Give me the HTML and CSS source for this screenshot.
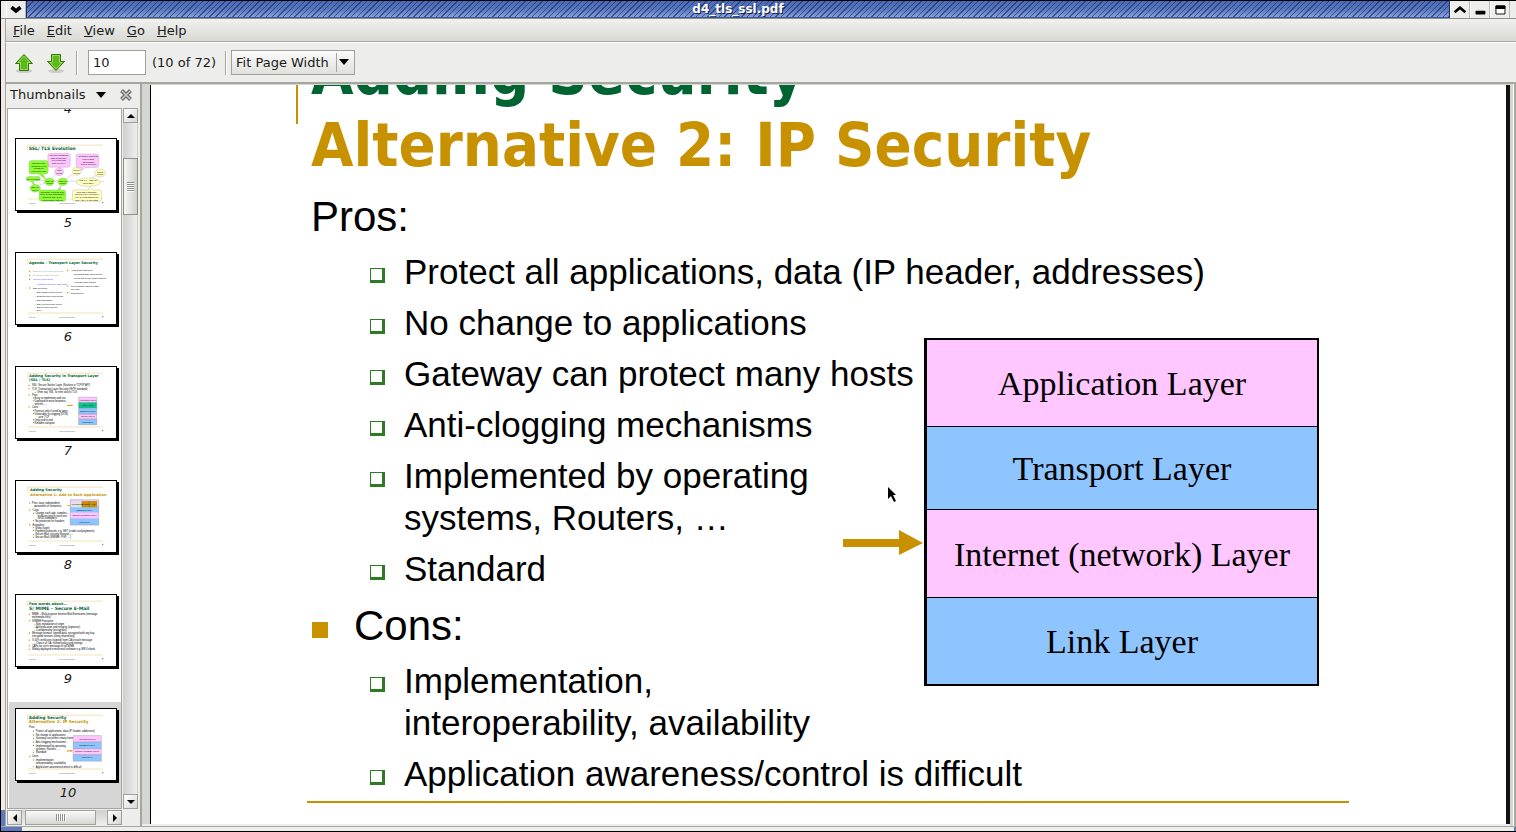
FILE: index.html
```html
<!DOCTYPE html>
<html lang="en">
<head>
<meta charset="utf-8">
<title>d4_tls_ssl.pdf</title>
<link rel="stylesheet" href="styles.css">
</head>
<body>
<svg class="defs" aria-hidden="true">
  <defs>
    <g id="page-frame">
      <rect width="306" height="219" fill="#fff"/>
      <path d="M35 36V19H267M35 185H267" fill="none" stroke="#f3e2b6" stroke-width="3"/>
      <text x="39" y="199" font-size="6" fill="#555">11/9/05</text>
      <text x="130" y="199" font-size="6" fill="#555">AmirHerzberg.com</text>
      <rect x="264" y="194" width="4" height="4" fill="#888"/>
    </g>
  </defs>
</svg>
<div class="window">
  <header class="titlebar">
    <button class="wm" aria-label="Window menu"><svg viewBox="0 0 20 17"><path d="M5 6l5 4 5-4" fill="none" stroke="#000" stroke-width="4"/></svg></button>
    <h1 class="caption">d4_tls_ssl.pdf</h1>
    <div class="wm-group">
      <button class="wm" aria-label="Shade"><svg viewBox="0 0 20 17"><path d="M4 11.500l6-5 6 5" fill="none" stroke="#000" stroke-width="3"/></svg></button>
      <button class="wm" aria-label="Minimize"><svg viewBox="0 0 20 17"><rect x="5" y="10" width="11" height="4" rx="1"/></svg></button>
      <button class="wm" aria-label="Maximize"><svg viewBox="0 0 20 17"><path d="M5.500 4.500h10v9h-10z" fill="#fff" stroke="#000"/><path d="M6 4h9l1 1v3H5V5z"/></svg></button>
    </div>
  </header>
  <div class="frame">
    <nav class="menubar">
      <button><u>F</u>ile</button><button><u>E</u>dit</button><button><u>V</u>iew</button><button><u>G</u>o</button><button><u>H</u>elp</button>
    </nav>
    <div class="toolbar">
      <button class="tool" aria-label="Previous page"><svg viewBox="0 0 20 20"><ellipse cx="10" cy="18" rx="8" ry="2" fill="#000" opacity=".14"/><path d="M10 1.500L18.500 10.500H14.500V17.500H5.500V10.500H1.500z" fill="#5fb81a" stroke="#2f7a06"/><path d="M10 3l6 6.500h-2.500v7h-7v-7H4z" fill="none" stroke="#a5e070" opacity=".8"/></svg></button>
      <button class="tool" aria-label="Next page"><svg viewBox="0 0 20 20"><ellipse cx="10" cy="18" rx="8" ry="2" fill="#000" opacity=".14"/><path d="M5.500 1.500H14.500V8.500H18.500L10 17.500 1.500 8.500H5.500z" fill="#5fb81a" stroke="#2f7a06"/><path d="M6.500 2.500h7v7H16L10 16 4 9.500h2.500z" fill="none" stroke="#a5e070" opacity=".8"/></svg></button>
      <span class="sep"></span>
      <input class="page-input" id="page" type="text" value="10" aria-label="Page">
      <label for="page" class="page-count">(10 of 72)</label>
      <span class="sep"></span>
      <div class="zoom">
        <select aria-label="Zoom"><option>Fit Page Width</option></select>
        <svg class="zoom-arrow" viewBox="0 0 10 6"><path d="M0 0h10L5 6z"/></svg>
      </div>
    </div>
    <main class="body">
      <aside class="sidebar">
        <div class="side-head">
          <button class="side-title">Thumbnails<svg viewBox="0 0 10 6"><path d="M0 0h10L5 6z"/></svg></button>
          <button class="side-close" aria-label="Close sidebar"><svg viewBox="0 0 12 12"><path d="M1.500 1.500l9 9M10.500 1.500l-9 9" stroke="#6f716b" stroke-width="4"/><path d="M2 2l8 8M10 2l-8 8" stroke="#c9cac6" stroke-width="1.500"/></svg></button>
        </div>
        <div class="side-grid">
          <ol class="thumbs">
            <li class="thumb"><svg class="page" viewBox="0 0 306 219"><use href="#page-frame"/></svg><span>4</span></li>
            <li class="thumb"><svg class="page" viewBox="0 0 306 219"><use href="#page-frame"/>
              <text class="t green" x="38" y="35" font-size="14">SSL/ TLS Evolution</text>
              <g stroke="#9a9a8a" stroke-width="1">
                <path d="M60 128L270 132M104 128l24-30M146 128l36-26M215 128l40-20M64 146l30-14" fill="none"/>
                <g fill="#ffc6ff"><path d="M104 44h56q6 0 6 8v27q0 8-8 8h-17l-9 8 0-8h-27q-8 0-8-8V52q0-8 7-8zM192 46h54q8 0 8 8v26q0 8-8 8h-34l-15 12 3-12h-9q-7 0-7-8V54q0-8 8-8z"/><ellipse cx="132" cy="101" rx="14" ry="12"/></g>
                <g fill="#8cff32"><path d="M46 66h46q6 0 6 8v27q0 7-8 7h-8l10 20-22-20H46q-7 0-7-7V74q0-8 7-8zM38 116h30q6 0 6 7 0 6-6 6H52l4 14-14-14h-4q-8 0-8-6 0-7 8-7zM76 157h50l12-12-4 12h11q7 0 7 7v20q0 8-8 8H78q-8 0-8-8v-20q0-7 6-7z"/><ellipse cx="102" cy="132" rx="15" ry="12"/><ellipse cx="143" cy="132" rx="15" ry="12"/><ellipse cx="58" cy="152" rx="16" ry="12"/></g>
                <g fill="#ffffc0"><ellipse cx="186" cy="100" rx="14" ry="12"/><ellipse cx="258" cy="105" rx="17" ry="12"/><ellipse cx="222" cy="133" rx="38" ry="13"/><path d="M180 157h42l4-10 10 10h20q7 0 7 7v20q0 8-8 8h-74q-8 0-8-8v-20q0-7 7-7z"/></g>
              </g>
              <g class="tiny" text-anchor="middle">
                <text x="131" y="53">Microsoft suggests</text><text x="131" y="61">SSL 2 insecure;</text><text x="131" y="69">develops PCT</text><text x="131" y="77">with fixes to it</text>
                <text x="222" y="55">Netscape suggests</text><text x="222" y="64">TLS in IETF</text><text x="222" y="73">as standard</text><text x="222" y="81">secure protocol</text>
                <text x="69" y="76">Shipped with</text><text x="69" y="85">Netscape in all</text><text x="69" y="94">browsers</text><text x="69" y="102">encryption only</text>
                <text x="132" y="100">PCT</text><text x="132" y="108">(1995)</text><text x="186" y="100">STLP</text><text x="186" y="108">(1996)</text>
                <text x="52" y="126">Not released</text><text x="58" y="151">SSL v1</text><text x="58" y="159">(1994)</text><text x="102" y="132">SSL v2</text><text x="102" y="140">(1995)</text><text x="143" y="132">SSL v3</text><text x="143" y="140">(1996)</text><text x="222" y="131">TLS 1.0 = SSL 3.1</text><text x="222" y="140">RFC 2246</text><text x="258" y="104">WTLS</text><text x="258" y="112">(1998)</text>
                <text x="111" y="166">Netscape redesign with</text><text x="111" y="174">more secure handshake;</text><text x="111" y="182">supports RSA &amp; DH</text><text x="111" y="190">incompatible with v2</text>
                <text x="217" y="166">TLS: IETF standard,</text><text x="217" y="174">improved key derivation</text><text x="217" y="182">HMAC, must DSS &amp; DH</text><text x="217" y="190">RSA, SHA-1 and MD5</text>
              </g></svg><span>5</span></li>
            <li class="thumb"><svg class="page" viewBox="0 0 306 219"><use href="#page-frame"/>
              <text class="t green" x="39" y="33" font-size="11">Agenda – Transport Layer Security</text>
              <g fill="#e0a020"><path d="M39 55h4v4h-4zM39 67h4v4h-4zM39 79h4v4h-4zM39 106h4v4h-4zM156 52h4v4h-4zM156 100h4v4h-4zM156 120h4v4h-4z"/></g>
              <g class="tiny"><g fill="#999"><text x="51" y="60">Example: protecting payments</text><text x="51" y="72">Evolution of SSL and TLS</text></g><g fill="#33f"><text x="51" y="84">Layers of protection</text><text x="60" y="99">– Transport Security (SSL/TLS)</text></g>
                <text x="51" y="111">SSL Protocols</text><text x="57" y="123">– SSL phases and services</text><text x="57" y="135">– Sessions and connections</text><text x="57" y="147">– SSL handshake</text><text x="57" y="159">– SSL protocols and layers</text><text x="57" y="171">– SSL Record protocol</text><text x="62" y="180">layer</text>
                <text x="168" y="56">Attacks and SSL/TLS</text><text x="173" y="69">– Designing SSL applications</text><text x="173" y="81">– Client and server authentication</text><text x="173" y="93">– Web spoofing attacks</text><text x="168" y="104">Cryptographic issues in SSL</text><text x="168" y="113">and TLS</text><text x="168" y="125">Conclusions</text></g></svg><span>6</span></li>
            <li class="thumb"><svg class="page" viewBox="0 0 306 219"><use href="#page-frame"/>
              <g class="t green" font-size="11"><text x="39" y="30">Adding Security in Transport Layer</text><text x="39" y="44">(SSL / TLS)</text></g>
              <g fill="#e0a020"><path d="M37 55h4v4h-4zM37 65h4v4h-4zM37 85h4v4h-4zM37 121h4v4h-4zM156 117h14v-2l5 3-5 4v-2h-14z"/></g>
              <g fill="#2a8a2a"><path d="M51 94h3v3h-3zM51 103h3v3h-3zM51 133h3v3h-3zM51 142h3v3h-3zM51 161h3v3h-3zM51 170h3v3h-3z"/></g>
              <g class="tiny big"><text x="48" y="60">SSL: Secure Socket Layer (Sockets is TCP/IP API)</text><text x="48" y="70">TLS: Transaction Layer Security (IETF standard)</text><text x="56" y="79">– Often say 'SSL' to refer also to TLS</text><text x="48" y="90">Pros:</text><text x="56" y="100">Easy to implement and use</text><text x="56" y="109">Deployed in most browsers,</text><text x="56" y="117">servers, …</text><text x="48" y="127">Cons:</text><text x="56" y="139">Protects only if used by apps</text><text x="56" y="148">Vulnerable to clogging (DOS)</text><text x="68" y="157">over TCP</text><text x="56" y="167">Only end to end</text><text x="56" y="176">Reliable transport</text></g>
              <g stroke="#777"><path d="M192 93h56v17h-56zM192 145h56v16h-56z" fill="#ffc6ff"/><path d="M192 110h56v17h-56z" fill="#00c890"/><path d="M192 127h56v18h-56zM192 161h56v17h-56z" fill="#8fc5ff"/></g>
              <g class="tiny" text-anchor="middle"><text x="220" y="104">Application Layer</text><text x="220" y="121">SSL / TLS</text><text x="220" y="138">Transport Layer</text><text x="220" y="155">Internet Layer</text><text x="220" y="172">Link Layer</text></g></svg><span>7</span></li>
            <li class="thumb"><svg class="page" viewBox="0 0 306 219"><use href="#page-frame"/>
              <text class="t green" x="42" y="30" font-size="11">Adding Security</text><text class="t gold" x="42" y="45" font-size="11">Alternative 1: Add to Each Application</text>
              <g fill="#e0a020"><path d="M39 66h4v4h-4zM39 88h4v4h-4zM39 133h4v4h-4zM156 75h12v-3l6 4-6 4v-3h-12z"/></g>
              <g fill="#2a8a2a"><path d="M51 98h3v3h-3zM51 121h3v3h-3zM51 143h3v3h-3zM51 151h3v3h-3zM51 164h3v3h-3zM51 172h3v3h-3z"/></g>
              <g class="tiny big"><text x="48" y="72">Pros: easy, independent,</text><text x="54" y="81">awareness of semantics</text><text x="50" y="93">Cons:</text><text x="58" y="103">Change each app, complex –</text><text x="66" y="111">build security in each one</text><text x="66" y="118">on all computers</text><text x="58" y="127">No protection for headers</text><text x="50" y="138">Examples:</text><text x="58" y="148">S/key (login)</text><text x="58" y="156">Payment protocols, e.g. SET (credit card payments)</text><text x="58" y="168">Secure Mail: security features, …</text><text x="58" y="177">Secure Mail (S/MIME, PGP, …)</text></g>
              <path d="M166 58h88v78h-88z" fill="#8fc5ff" stroke="#777"/><path d="M167 59h86v20h-86zM167 97h86v19h-86z" fill="#ffc6ff"/><path d="M168 63h34v18h-34z" fill="#e4e4dc"/><path d="M202 62h47v19h-47z" fill="#c89000"/><path d="M225 62v19M202 62v19" stroke="#555"/>
              <g class="tiny" text-anchor="middle"><text x="185" y="74">Application</text><text x="214" y="74">Security</text><text x="237" y="74">App</text><text x="210" y="91">Transport Layer</text><text x="210" y="109">Internet (network) Layer</text><text x="210" y="129">Link Layer</text></g></svg><span>8</span></li>
            <li class="thumb"><svg class="page" viewBox="0 0 306 219"><use href="#page-frame"/>
              <text class="t green" x="39" y="30" font-size="11">Few words about…</text><text class="t green" x="39" y="47" font-size="14">S/ MIME – Secure E-Mail</text>
              <g fill="#e0a020"><path d="M38 58h4v4h-4zM38 77h4v4h-4zM38 116h4v4h-4zM38 137h4v4h-4zM38 155h4v4h-4zM38 166h4v4h-4z"/></g>
              <g class="tiny big"><text x="48" y="63">MIME – Multi-purpose Internet Mail Extensions (message</text><text x="48" y="72">multimedia files)</text><text x="48" y="82">S/MIME Functions:</text><text x="54" y="92">– Non-repudiation of origin</text><text x="54" y="101">– Authentication and integrity (signature)</text><text x="54" y="110">– Confidentiality (encryption)</text><text x="48" y="120">Message formats: signed-data, encrypted with any key,</text><text x="48" y="129">encrypted session (using shared key)</text><text x="48" y="141">X.509 certificates (signed) from CA to each message</text><text x="54" y="150">– Choice of CA: trusted policy and settings</text><text x="48" y="159">CAFs for cert's message in full MIME</text><text x="48" y="171">Widely deployed in most mail software e.g. MS Outlook</text></g></svg><span>9</span></li>
            <li class="thumb selected"><svg class="page" viewBox="0 0 306 219"><use href="#page-frame"/>
              <text class="t green" x="38" y="30" font-size="13">Adding Security</text><text class="t gold" x="38" y="44" font-size="13">Alternative 2: IP Security</text>
              <path d="M39 144h4v4h-4zM156 127h12v-2l6 4-6 4v-2h-12z" fill="#e0a020"/>
              <g fill="#2a8a2a"><path d="M51 67h3v3h-3zM51 79h3v3h-3zM51 90h3v3h-3zM51 100h3v3h-3zM51 111h3v3h-3zM51 132h3v3h-3zM51 156h3v3h-3zM51 177h3v3h-3z"/></g>
              <g class="tiny big"><text x="39" y="59">Pros:</text><text x="60" y="72">Protect all applications, data (IP header, addresses)</text><text x="60" y="84">No change to applications</text><text x="60" y="94">Gateway can protect many hosts</text><text x="60" y="105">Anti-clogging mechanisms</text><text x="60" y="116">Implemented by operating</text><text x="60" y="125">systems, Routers, …</text><text x="60" y="137">Standard</text><text x="48" y="149">Cons:</text><text x="60" y="161">Implementation,</text><text x="60" y="170">interoperability, availability</text><text x="60" y="182">Application awareness/control is difficult</text></g>
              <g stroke="#888"><path d="M175 82h87v20h-87zM175 122h87v19h-87z" fill="#ffc6ff"/><path d="M175 102h87v20h-87zM175 141h87v20h-87z" fill="#8fc5ff"/></g>
              <g class="tiny" text-anchor="middle"><text x="218" y="95">Application Layer</text><text x="218" y="114">Transport Layer</text><text x="218" y="134">Internet (network) Layer</text><text x="218" y="152">Link Layer</text></g></svg><span>10</span></li>
          </ol>
          <div class="vscroll">
            <button class="sb" aria-label="Scroll up"><svg viewBox="0 0 8 4"><path d="M4 0l4 4H0z"/></svg></button>
            <div class="vtrough"><div class="vthumb"></div></div>
            <button class="sb" aria-label="Scroll down"><svg viewBox="0 0 8 4"><path d="M0 0h8L4 4z"/></svg></button>
          </div>
          <div class="hscroll">
            <button class="sb" aria-label="Scroll left"><svg viewBox="0 0 8 8"><path d="M2 4l4-4v8z"/></svg></button>
            <div class="htrough"><div class="hthumb"></div></div>
            <button class="sb" aria-label="Scroll right"><svg viewBox="0 0 8 8"><path d="M6 4L2 0v8z"/></svg></button>
          </div>
        </div>
      </aside>
      <section class="document">
        <article class="slide">
          <h2 class="slide-title">Adding Security<br><span>Alternative 2: IP Security</span></h2>
          <p class="head">Pros:</p>
          <ul class="points">
            <li>Protect all applications, data (IP header, addresses)</li>
            <li>No change to applications</li>
            <li>Gateway can protect many hosts</li>
            <li>Anti-clogging mechanisms</li>
            <li>Implemented by operating<br>systems, Routers, …</li>
            <li>Standard</li>
          </ul>
          <p class="head marked">Cons:</p>
          <ul class="points">
            <li>Implementation,<br>interoperability, availability</li>
            <li>Application awareness/control is difficult</li>
          </ul>
          <hr class="rule">
          <div class="layers">
            <div>Application Layer</div><div>Transport Layer</div><div>Internet (network) Layer</div><div>Link Layer</div>
          </div>
          <svg class="pointer-arrow" viewBox="0 0 80 26"><path d="M0 9h56V0l24 13-24 12v-8H0z" fill="#c79100"/></svg>
          <svg class="cursor" viewBox="0 0 9 15"><path d="M0 0l8 8H5l3 6-2 1-3-6-3 3z"/></svg>
        </article>
      </section>
      <div class="doc-edge"></div>
    </main>
  </div>
  <footer class="resize"><span></span><span></span></footer>
</div>
</body>
</html>
```
FILE: styles.css
```css
*, *::before, *::after { box-sizing: border-box; }
body {
  margin: 0;
  background: #ededeb;
  color: #1a1a1a;
  font: 13px/16px "DejaVu Sans", sans-serif;
}
button {
  margin: 0;
  padding: 0;
  border: 0;
  background: none;
  color: inherit;
  font: inherit;
}
.defs { position: absolute; width: 0; height: 0; }
.window {
  display: flex;
  flex-direction: column;
  height: 100vh;
  overflow: hidden;
  border-left: 1px solid #000;
}

/* Title bar */
.titlebar {
  display: flex;
  flex: none;
  height: 19px;
  padding-left: 5px;
  border-top: 1px solid #000;
  border-bottom: 1px solid #8d8f89;
  background: #ededeb;
}
.wm {
  width: 20px;
  height: 17px;
  border-left: 1px solid #fff;
  border-right: 1px solid #b8b8b4;
  background: #ededeb;
}
.wm svg { display: block; width: 18px; height: 17px; }
.wm-group { display: flex; padding-right: 6px; border-left: 1px solid #1c2f66; }
.caption {
  flex: 1;
  margin: 0;
  border-left: 1px solid #1c2f66;
  border-bottom: 1px solid #3b5599;
  background:
    repeating-linear-gradient(135deg, rgba(20, 38, 92, .6) 0 1px, transparent 1px 4px),
    linear-gradient(#4a6cb8, #5876bd 50%, #86a0d8);
  color: #fff;
  font: bold 12px/17px "DejaVu Sans", sans-serif;
  text-align: center;
  text-shadow: 1px 1px 0 #13204a;
}

/* Menu bar and toolbar */
.frame {
  display: flex;
  flex: 1;
  flex-direction: column;
  min-height: 0;
  padding-left: 4px;
  background: linear-gradient(to top, #5b7bc0 16px, #f0e9e7 16px) left / 4px 100% no-repeat;
}
.menubar {
  display: flex;
  flex: none;
  gap: 12px;
  height: 23px;
  padding: 1px 0 0 7px;
  border-left: 1px solid #a5a79f;
  border-bottom: 1px solid #a5a79f;
  background: linear-gradient(#f0f0ee, #d9dad4);
}
.toolbar {
  display: flex;
  flex: none;
  align-items: center;
  height: 42px;
  padding-left: 8px;
  border-left: 1px solid #a5a79f;
  border-top: 1px solid #fff;
  border-bottom: 2px solid #a5a79f;
}
.tool { width: 20px; height: 20px; margin-right: 12px; }
.tool + .tool { margin-right: 10px; }
.tool svg { display: block; width: 20px; height: 20px; }
.sep {
  width: 2px;
  height: 24px;
  border-left: 1px solid #a5a79f;
  border-right: 1px solid #fff;
}
.page-input {
  width: 58px;
  height: 25px;
  margin: 0 6px 0 10px;
  padding: 0 4px;
  border: 1px solid #a0a29a;
  background: #fff;
  color: #1a1a1a;
  font: 13px "DejaVu Sans", sans-serif;
}
.page-count { margin-right: 9px; }
.zoom { position: relative; margin-left: 4px; }
.zoom select {
  width: 124px;
  height: 25px;
  padding: 0 4px;
  border: 1px solid #a0a29a;
  border-radius: 0;
  appearance: none;
  background: linear-gradient(#fbfbfa, #e0e0dc);
  color: #1a1a1a;
  font: 13px "DejaVu Sans", sans-serif;
}
.zoom::after {
  position: absolute;
  top: 3px;
  right: 18px;
  height: 19px;
  border-left: 1px solid #a5a79f;
  content: "";
}
.zoom-arrow { position: absolute; top: 9px; right: 6px; width: 10px; height: 6px; }

/* Sidebar */
.body { display: flex; flex: 1; min-height: 0; }
.sidebar {
  display: flex;
  flex: none;
  flex-direction: column;
  width: 137px;
  border-left: 1px solid #a5a79f;
  border-right: 2px solid #a5a79f;
}
.side-head {
  display: flex;
  flex: none;
  align-items: center;
  justify-content: space-between;
  height: 24px;
  padding: 0 8px 3px 4px;
}
.side-title { display: flex; align-items: center; gap: 10px; }
.side-title svg { width: 10px; height: 6px; }
.side-close svg { display: block; width: 12px; height: 12px; }
.side-grid {
  display: grid;
  flex: 1;
  grid-template: minmax(0, 1fr) 16px / minmax(0, 1fr) 16px;
  gap: 1px;
  min-height: 0;
  padding: 0 1px;
}
.thumbs {
  overflow: hidden;
  margin: 0;
  padding: 0 0 0 1px;
  border: 1px solid #a5a79f;
  background: #fff;
  list-style: none;
}
.thumb {
  display: flex;
  flex-direction: column;
  align-items: center;
  height: 106px;
  margin-bottom: 8px;
  padding: 6px 0 0 2px;
}
.thumb:first-child { margin-top: -91px; }
.thumb.selected { background: #d6d6d6; }
.page {
  width: 102px;
  height: 73px;
  border: 1px solid #000;
  background: #fff;
  box-shadow: 2px 2px 0 #000;
  font-family: "Liberation Sans", sans-serif;
}
.thumb span { margin-top: 4px; padding-left: 4px; font-style: italic; }
.t { font-family: "DejaVu Sans", sans-serif; font-weight: bold; }
.green { fill: #006432; }
.gold { fill: #c79100; }
.tiny { font-size: 7px; }
.big { font-size: 8px; }

/* Scroll bars */
.sb {
  display: grid;
  place-items: center;
  flex: none;
  width: 15px;
  height: 15px;
  border: 1px solid #a0a29a;
  background: linear-gradient(135deg, #fff, #d6d7d3);
}
.sb svg { width: 8px; height: 8px; }
.vscroll { display: flex; flex-direction: column; }
.vtrough {
  flex: 1;
  width: 15px;
  padding-top: 35px;
  border-right: 1px solid #c9cac6;
  background: linear-gradient(90deg, #d0d1cd, #eeeeec);
}
.vthumb {
  width: 15px;
  height: 57px;
  border: 1px solid #8d8f89;
  background:
    repeating-linear-gradient(#8d8f89 0 1px, #fff 1px 2px) center / 7px 10px no-repeat,
    linear-gradient(90deg, #f6f6f5, #d0d1cd);
}
.hscroll { display: flex; }
.htrough {
  flex: 1;
  height: 15px;
  padding-left: 3px;
  background: linear-gradient(#d0d1cd, #eeeeec);
}
.hthumb {
  width: 71px;
  height: 15px;
  border: 1px solid #a0a29a;
  background:
    repeating-linear-gradient(90deg, #8d8f89 0 1px, #fff 1px 2px) center / 10px 7px no-repeat,
    linear-gradient(#f9f9f8, #d6d7d3);
}

/* Document view */
.document {
  flex: 1;
  overflow: hidden;
  min-width: 0;
  margin-bottom: 2px;
  padding-left: 8px;
  border-top: 1px solid #d4d6d2;
  background: #d4d6d2;
}
.slide {
  display: flow-root;
  position: relative;
  height: 100%;
  padding-left: 160px;
  border-left: 1px solid #000;
  border-right: 4px solid #111;
  background: #fff;
  color: #000;
  font: 35px/42px "Liberation Sans", sans-serif;
}
.slide-title {
  position: relative;
  margin: -48px 0 12px;
  color: #006432;
  font: bold 61px/72px "DejaVu Sans Condensed", "DejaVu Sans", sans-serif;
}
.slide-title span { color: #c79100; }
.slide-title::before {
  position: absolute;
  top: 0;
  left: -15px;
  height: 87px;
  border-left: 2px solid #c79100;
  content: "";
}
.head { margin: 0 0 10px; font-size: 42px; line-height: 48px; }
.marked { display: flex; align-items: center; gap: 26px; margin-top: 12px; }
.marked::before { width: 16px; height: 16px; margin: 8px 0 0 1px; background: #c79100; content: ""; }
.points {
  display: flex;
  flex-direction: column;
  gap: 9px;
  margin: 0;
  padding-left: 93px;
  list-style: none;
}
.points li { position: relative; }
.points li::before {
  position: absolute;
  top: 17px;
  left: -34px;
  width: 15px;
  height: 15px;
  border: 1px solid #2f7a24;
  border-right-width: 3px;
  border-bottom-width: 3px;
  content: "";
}
.rule {
  width: 1042px;
  max-width: 100%;
  margin: 6px 0 0 -4px;
  border: 0;
  border-top: 2px solid #c79100;
}
.layers {
  position: absolute;
  top: 253px;
  left: 773px;
  display: grid;
  grid-template-rows: 86px 83px 88px 87px;
  width: 395px;
  border: 2px solid #000;
  border-left-width: 3px;
  font: 34px/42px "Liberation Serif", serif;
}
.layers div { display: grid; place-items: center; padding-top: 2px; background: #8fc5ff; }
.layers div:nth-child(odd) { background: #ffc6ff; }
.layers div + div { border-top: 1px solid #000; }
.pointer-arrow { position: absolute; top: 445px; left: 692px; width: 80px; height: 26px; }
.cursor { position: absolute; top: 402px; left: 737px; width: 9px; height: 15px; }
.doc-edge {
  flex: none;
  width: 6px;
  border-left: 3px solid #d4d6d2;
  border-right: 2px solid #a5a79f;
  background: #fff;
}

/* Bottom frame */
.resize {
  display: flex;
  flex: none;
  justify-content: space-between;
  height: 6px;
  border-top: 1px solid #a5a79f;
  border-bottom: 1px solid #000;
  background: #ededeb;
}
.resize span { width: 21px; background: #5b7bc0; }
.resize span:last-child { width: 2px; }
```
